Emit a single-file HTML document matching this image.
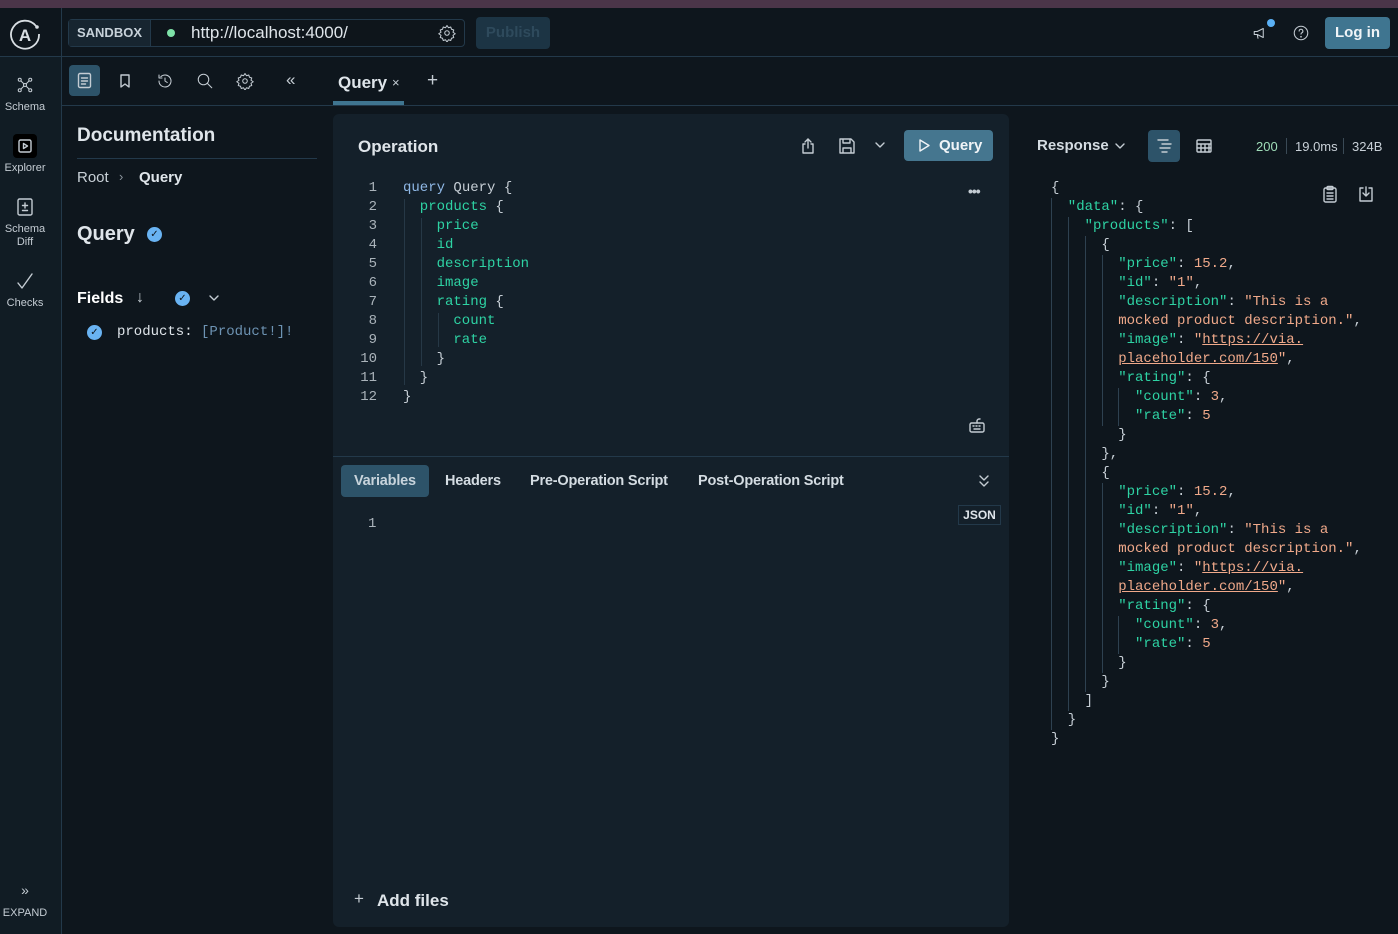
<!DOCTYPE html>
<html><head><meta charset="utf-8"><style>
*{box-sizing:border-box;margin:0;padding:0}
body{width:1398px;height:934px;background:#0e161d;font-family:"Liberation Sans",sans-serif;color:#dfe5ea;position:relative;overflow:hidden}
.abs{position:absolute}
.mono{font-family:"Liberation Mono",monospace;font-size:14px}
.ic{stroke:#c4ccd3;fill:none;stroke-width:1.4;stroke-linecap:round;stroke-linejoin:round}
.code div{height:19px;line-height:19px;white-space:pre}
.g{color:#2ed3a4}.b{color:#8fb8e6}.w{color:#c6ced5}.o{color:#f0a98a}
.ln{color:#aab3ba;text-align:right}
.side{position:absolute;left:0;width:50px;text-align:center;font-size:11px;color:#c4ccd3}
.tab{position:absolute;top:473px;font-size:14.5px;font-weight:bold;color:#d4dce2;letter-spacing:-0.2px}
</style></head><body>
<div class="abs" style="left:0;top:0;width:1398px;height:8px;background:#4b3549"></div>
<div class="abs" style="left:0;top:56px;width:1398px;height:1px;background:#23394a"></div>
<div class="abs" style="left:61px;top:8px;width:1px;height:926px;background:#23394a"></div>
<div class="abs" style="left:0;top:57px;width:61px;height:877px;background:#111c24"></div>
<div class="abs" style="left:62px;top:105px;width:1336px;height:1px;background:#23394a"></div>
<svg class="abs" style="left:8px;top:17px" width="34" height="34" viewBox="0 0 34 34"><path d="M28 9 A14 14 0 1 0 31 17" stroke="#d8dee3" stroke-width="1.8" fill="none"/><circle cx="29" cy="10" r="1.8" fill="#d8dee3"/><text x="17" y="24" text-anchor="middle" font-family="Liberation Sans" font-weight="bold" font-size="17" fill="#d8dee3">A</text></svg>
<div class="abs" style="left:68px;top:19px;width:397px;height:28px;border:1px solid #23394a;border-radius:4px;background:#0e151b"></div>
<div class="abs" style="left:69px;top:20px;width:82px;height:26px;background:#172530;border-right:1px solid #23394a;font-size:13px;font-weight:bold;line-height:26px;text-align:center;color:#c8d2da">SANDBOX</div>
<div class="abs" style="left:167px;top:29px;width:8px;height:8px;border-radius:50%;background:#7ee2a8"></div>
<div class="abs" style="left:191px;top:22px;font-size:17px;line-height:22px;color:#dfe5ea">http://localhost:4000/</div>
<svg class="abs ic" style="left:438px;top:24px" width="18" height="18" viewBox="0 0 24 24"><circle cx="12" cy="12" r="3"/><path d="M12 2l2 3 3-1 1 3 3 1-1 3 3 2-3 2 1 3-3 1-1 3-3-1-2 3-2-3-3 1-1-3-3-1 1-3-3-2 3-2-1-3 3-1 1-3 3 1z"/></svg>
<div class="abs" style="left:476px;top:17px;width:74px;height:32px;background:#1c3444;border-radius:4px;font-size:15px;font-weight:bold;line-height:32px;text-align:center;color:#2e4a5c">Publish</div>
<svg class="abs ic" style="left:1252px;top:24px" width="18" height="18" viewBox="0 0 24 24"><path d="M3 10v4h4l8 4V6L7 10z M7 14l1 5"/></svg>
<div class="abs" style="left:1267px;top:19px;width:8px;height:8px;border-radius:50%;background:#5ab0f5"></div>
<svg class="abs ic" style="left:1292px;top:24px" width="18" height="18" viewBox="0 0 24 24"><circle cx="12" cy="12" r="9"/><path d="M9.5 9.5a2.5 2.5 0 1 1 3.5 2.3c-.7.4-1 .9-1 1.7"/><circle cx="12" cy="17" r=".5"/></svg>
<div class="abs" style="left:1325px;top:17px;width:65px;height:32px;background:#3f7590;border-radius:4px;font-size:15px;font-weight:bold;line-height:32px;text-align:center;color:#f0f4f7">Log in</div>
<svg class="abs ic" style="left:16px;top:76px" width="18" height="18" viewBox="0 0 24 24"><circle cx="12" cy="12" r="2"/><circle cx="5" cy="5" r="2"/><circle cx="19" cy="5" r="2"/><circle cx="5" cy="19" r="2"/><circle cx="19" cy="19" r="2"/><path d="M7 7l3 3M17 7l-3 3M7 17l3-3M17 17l-3-3"/></svg>
<div class="side" style="top:101px">Schema</div>
<div class="abs" style="left:13px;top:134px;width:24px;height:24px;background:#000;border-radius:4px"></div>
<svg class="abs ic" style="left:17px;top:138px" width="16" height="16" viewBox="0 0 16 16"><rect x="2" y="2" width="12" height="12" rx="1.5"/><path d="M6.5 5.5v5l4-2.5z"/></svg>
<div class="side" style="top:162px">Explorer</div>
<svg class="abs ic" style="left:16px;top:197px" width="18" height="20" viewBox="0 0 18 20"><rect x="2" y="2" width="14" height="16" rx="1.5"/><path d="M9 6v5M6.5 8.5h5M6.5 13.5h5"/></svg>
<div class="side" style="top:223px;line-height:13px">Schema<br>Diff</div>
<svg class="abs ic" style="left:16px;top:272px" width="18" height="18" viewBox="0 0 18 18"><path d="M2 11l4 5L16 2"/></svg>
<div class="side" style="top:297px">Checks</div>
<div class="side" style="top:882px;font-size:14px">»</div>
<div class="side" style="top:907px">EXPAND</div>
<div class="abs" style="left:69px;top:65px;width:31px;height:31px;background:#2d5369;border-radius:4px"></div>
<svg class="abs ic" style="left:76px;top:72px" width="17" height="17" viewBox="0 0 17 17"><rect x="2.5" y="1.5" width="12" height="14" rx="1.5"/><path d="M5.5 6h6M5.5 9h6M5.5 12h4"/></svg>
<svg class="abs ic" style="left:117px;top:73px" width="16" height="16" viewBox="0 0 16 16"><path d="M4 2h8v12l-4-3-4 3z"/></svg>
<svg class="abs ic" style="left:156px;top:72px" width="18" height="18" viewBox="0 0 24 24"><path d="M4 12a8 8 0 1 0 2.5-5.8M4 4v4h4M12 8v4l3 2"/></svg>
<svg class="abs ic" style="left:196px;top:72px" width="18" height="18" viewBox="0 0 24 24"><circle cx="10" cy="10" r="7"/><path d="M15 15l6 6"/></svg>
<svg class="abs ic" style="left:236px;top:72px" width="18" height="18" viewBox="0 0 24 24"><circle cx="12" cy="12" r="3"/><path d="M12 2l2 3 3-1 1 3 3 1-1 3 3 2-3 2 1 3-3 1-1 3-3-1-2 3-2-3-3 1-1-3-3-1 1-3-3-2 3-2-1-3 3-1 1-3 3 1z"/></svg>
<div class="abs" style="left:286px;top:70px;font-size:17px;color:#c4ccd3">«</div>
<div class="abs" style="left:338px;top:73px;font-size:17px;font-weight:bold;color:#dfe5ea">Query</div>
<div class="abs" style="left:392px;top:75px;font-size:13px;color:#c4ccd3">×</div>
<div class="abs" style="left:427px;top:70px;font-size:19px;color:#c4ccd3">+</div>
<div class="abs" style="left:333px;top:101px;width:71px;height:4px;background:#3f7590"></div>
<div class="abs" style="left:77px;top:125px;font-size:19px;font-weight:bold;color:#dfe5ea">Documentation</div>
<div class="abs" style="left:77px;top:158px;width:240px;height:1px;background:#23394a"></div>
<div class="abs" style="left:77px;top:169px;font-size:15px;color:#c8d0d7">Root</div>
<div class="abs" style="left:119px;top:169px;font-size:13px;color:#8a949c">›</div>
<div class="abs" style="left:139px;top:169px;font-size:15px;font-weight:bold;color:#dfe5ea">Query</div>
<div class="abs" style="left:77px;top:223px;font-size:20px;font-weight:bold;color:#dfe5ea">Query</div>
<div class="abs" style="left:147px;top:227px;width:15px;height:15px;border-radius:50%;background:#69b3f2;color:#0e161d;font-size:10px;text-align:center;line-height:15px">✓</div>
<div class="abs" style="left:77px;top:290px;font-size:16px;font-weight:bold;color:#fff">Fields</div>
<div class="abs" style="left:136px;top:289px;font-size:16px;color:#c4ccd3">↓</div>
<div class="abs" style="left:175px;top:291px;width:15px;height:15px;border-radius:50%;background:#69b3f2;color:#0e161d;font-size:10px;text-align:center;line-height:15px">✓</div>
<svg class="abs ic" style="left:208px;top:293px" width="12" height="10" viewBox="0 0 12 10"><path d="M2 3l4 4 4-4"/></svg>
<div class="abs" style="left:87px;top:325px;width:15px;height:15px;border-radius:50%;background:#69b3f2;color:#0e161d;font-size:10px;text-align:center;line-height:15px">✓</div>
<div class="abs mono" style="left:117px;top:324px;color:#dfe5ea">products: <span style="color:#6d93b3">[Product!]!</span></div>
<div class="abs" style="left:333px;top:114px;width:676px;height:813px;background:#14202a;border-radius:6px"></div>
<div class="abs" style="left:358px;top:137px;font-size:17px;font-weight:bold;color:#dfe5ea">Operation</div>
<svg class="abs ic" style="left:799px;top:137px" width="18" height="18" viewBox="0 0 18 18"><path d="M6 7H4v9h10V7h-2M9 11V2M6 5l3-3 3 3"/></svg>
<svg class="abs ic" style="left:838px;top:137px" width="18" height="18" viewBox="0 0 18 18"><path d="M2 2h11l3 3v11H2z M5 2v4h7V2M5 16v-5h8v5"/></svg>
<svg class="abs ic" style="left:874px;top:140px" width="12" height="10" viewBox="0 0 12 10"><path d="M2 3l4 4 4-4"/></svg>
<div class="abs" style="left:904px;top:130px;width:89px;height:31px;background:#45768f;border-radius:4px"></div>
<svg class="abs ic" style="left:917px;top:138px" width="14" height="15" viewBox="0 0 14 15"><path d="M3 2v11l9-5.5z" stroke="#f0f4f7"/></svg>
<div class="abs" style="left:939px;top:137px;font-size:15px;font-weight:bold;color:#f0f4f7">Query</div>
<div class="abs" style="left:968px;top:183px;font-size:14px;color:#c4ccd3;letter-spacing:-1px;font-weight:bold">•••</div>
<div class="abs mono code ln" style="left:350px;top:179px;width:27px">
<div>1</div><div>2</div><div>3</div><div>4</div><div>5</div><div>6</div><div>7</div><div>8</div><div>9</div><div>10</div><div>11</div><div>12</div></div>
<div class="abs" style="left:404px;top:199px;width:1px;height:186px;background:#263846"></div>
<div class="abs" style="left:421px;top:218px;width:1px;height:148px;background:#263846"></div>
<div class="abs" style="left:438px;top:313px;width:1px;height:34px;background:#263846"></div>
<div class="abs mono code" style="left:403px;top:179px">
<div><span class="b">query</span><span class="w"> Query {</span></div>
<div><span class="g">  products</span><span class="w"> {</span></div>
<div class="g">    price</div><div class="g">    id</div><div class="g">    description</div><div class="g">    image</div>
<div><span class="g">    rating</span><span class="w"> {</span></div>
<div class="g">      count</div><div class="g">      rate</div>
<div class="w">    }</div><div class="w">  }</div><div class="w">}</div></div>
<svg class="abs ic" style="left:968px;top:416px" width="18" height="18" viewBox="0 0 18 18"><rect x="2" y="7" width="14" height="9" rx="1.5"/><path d="M9 7V5c0-1 1-2 2-2h1M5 10h1M8 10h1M11 10h1M6 13h6"/></svg>
<div class="abs" style="left:333px;top:456px;width:676px;height:1px;background:#23394a"></div>
<div class="abs" style="left:341px;top:465px;width:88px;height:32px;background:#2d5369;border-radius:4px"></div>
<div class="tab" style="left:354px;color:#c8d4dc">Variables</div>
<div class="tab" style="left:445px">Headers</div>
<div class="tab" style="left:530px">Pre-Operation Script</div>
<div class="tab" style="left:698px">Post-Operation Script</div>
<svg class="abs ic" style="left:978px;top:474px" width="12" height="14" viewBox="0 0 12 14"><path d="M2 2l4 4 4-4M2 8l4 4 4-4"/></svg>
<div class="abs" style="left:958px;top:505px;width:43px;height:20px;border:1px solid #23394a;font-size:12px;font-weight:bold;line-height:18px;text-align:center;color:#dfe5ea">JSON</div>
<div class="abs mono" style="left:368px;top:516px;color:#aab3ba">1</div>
<div class="abs" style="left:354px;top:889px;font-size:17px;color:#c4ccd3">+</div>
<div class="abs" style="left:377px;top:891px;font-size:17px;font-weight:bold;color:#dfe5ea">Add files</div>
<div class="abs" style="left:1037px;top:137px;font-size:15px;font-weight:bold;color:#d4dce2">Response</div>
<svg class="abs ic" style="left:1114px;top:141px" width="12" height="10" viewBox="0 0 12 10"><path d="M2 3l4 4 4-4"/></svg>
<div class="abs" style="left:1148px;top:130px;width:32px;height:32px;background:#2d5369;border-radius:4px"></div>
<svg class="abs ic" style="left:1155px;top:137px" width="18" height="18" viewBox="0 0 18 18"><path d="M3 3h10M7 7h9M5 11h10M7 15h5"/></svg>
<svg class="abs ic" style="left:1195px;top:137px" width="18" height="18" viewBox="0 0 18 18"><rect x="2" y="3" width="14" height="12" rx="1"/><path d="M2 7h14M2 11h14M6 7v8M10 7v8M14 7v8"/></svg>
<div class="abs" style="left:1256px;top:139px;font-size:13px;color:#9fdcb8">200</div>
<div class="abs" style="left:1286px;top:138px;width:1px;height:16px;background:#3a4a56"></div>
<div class="abs" style="left:1295px;top:139px;font-size:13px;color:#c8d0d7">19.0ms</div>
<div class="abs" style="left:1343px;top:138px;width:1px;height:16px;background:#3a4a56"></div>
<div class="abs" style="left:1352px;top:139px;font-size:13px;color:#c8d0d7">324B</div>
<svg class="abs ic" style="left:1321px;top:185px" width="18" height="18" viewBox="0 0 18 18"><rect x="3" y="3" width="12" height="14" rx="1.5"/><rect x="6" y="1.5" width="6" height="3" rx="1"/><path d="M6 8h6M6 11h6M6 14h6"/></svg>
<svg class="abs ic" style="left:1357px;top:185px" width="18" height="18" viewBox="0 0 18 18"><path d="M6 3H3v13h12V3h-3M9 2v9M6 8l3 3 3-3"/></svg>
<div class="abs" style="left:1051px;top:198px;width:1px;height:532px;background:#2e4150"></div>
<div class="abs" style="left:1068px;top:217px;width:1px;height:494px;background:#2e4150"></div>
<div class="abs" style="left:1085px;top:236px;width:1px;height:456px;background:#2e4150"></div>
<div class="abs" style="left:1102px;top:255px;width:1px;height:171px;background:#2e4150"></div>
<div class="abs" style="left:1118px;top:388px;width:1px;height:38px;background:#2e4150"></div>
<div class="abs" style="left:1102px;top:483px;width:1px;height:190px;background:#2e4150"></div>
<div class="abs" style="left:1118px;top:616px;width:1px;height:38px;background:#2e4150"></div>
<div class="abs mono code" style="left:1051px;top:179px">
<div class="w">{</div>
<div><span class="g">  "data"</span><span class="w">: {</span></div>
<div><span class="g">    "products"</span><span class="w">: [</span></div>
<div class="w">      {</div>
<div><span class="g">        "price"</span><span class="w">: </span><span class="o">15.2</span><span class="w">,</span></div>
<div><span class="g">        "id"</span><span class="w">: </span><span class="o">"1"</span><span class="w">,</span></div>
<div><span class="g">        "description"</span><span class="w">: </span><span class="o">"This is a</span></div>
<div><span class="o">        mocked product description."</span><span class="w">,</span></div>
<div><span class="g">        "image"</span><span class="w">: </span><span class="o">"<u>https://via.</u></span></div>
<div><span class="o">        <u>placeholder.com/150</u>"</span><span class="w">,</span></div>
<div><span class="g">        "rating"</span><span class="w">: {</span></div>
<div><span class="g">          "count"</span><span class="w">: </span><span class="o">3</span><span class="w">,</span></div>
<div><span class="g">          "rate"</span><span class="w">: </span><span class="o">5</span></div>
<div class="w">        }</div>
<div class="w">      },</div>
<div class="w">      {</div>
<div><span class="g">        "price"</span><span class="w">: </span><span class="o">15.2</span><span class="w">,</span></div>
<div><span class="g">        "id"</span><span class="w">: </span><span class="o">"1"</span><span class="w">,</span></div>
<div><span class="g">        "description"</span><span class="w">: </span><span class="o">"This is a</span></div>
<div><span class="o">        mocked product description."</span><span class="w">,</span></div>
<div><span class="g">        "image"</span><span class="w">: </span><span class="o">"<u>https://via.</u></span></div>
<div><span class="o">        <u>placeholder.com/150</u>"</span><span class="w">,</span></div>
<div><span class="g">        "rating"</span><span class="w">: {</span></div>
<div><span class="g">          "count"</span><span class="w">: </span><span class="o">3</span><span class="w">,</span></div>
<div><span class="g">          "rate"</span><span class="w">: </span><span class="o">5</span></div>
<div class="w">        }</div>
<div class="w">      }</div>
<div class="w">    ]</div>
<div class="w">  }</div>
<div class="w">}</div>
</div>
</body></html>
